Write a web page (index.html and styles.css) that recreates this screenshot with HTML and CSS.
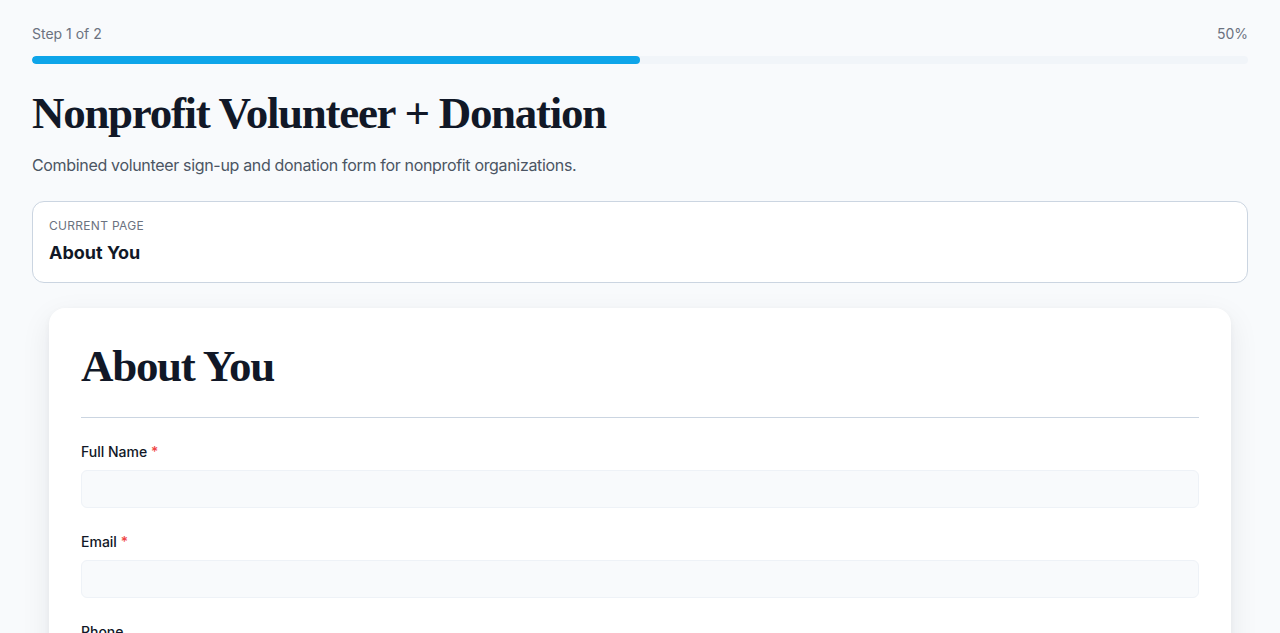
FILE: index.html
```html
<!DOCTYPE html>
<html lang="en">
<head>
<meta charset="utf-8">
<title>Nonprofit Volunteer + Donation</title>
<link rel="stylesheet" href="styles.css">
</head>
<body>
<main class="page">
  <div class="progress-head">
    <span>Step 1 of 2</span>
    <span>50%</span>
  </div>
  <div class="track"><div class="fill" style="width:50%"></div></div>
  <h1 class="title">Nonprofit Volunteer + Donation</h1>
  <p class="subtitle">Combined volunteer sign-up and donation form for nonprofit organizations.</p>
  <div class="current">
    <div class="current-label">Current Page</div>
    <div class="current-name">About You</div>
  </div>
  <section class="card">
    <h2 class="card-title">About You</h2>
    <div class="field">
      <label class="label">Full Name <span class="req">*</span></label>
      <div class="input"></div>
    </div>
    <div class="field">
      <label class="label">Email <span class="req">*</span></label>
      <div class="input"></div>
    </div>
    <div class="field">
      <label class="label">Phone</label>
      <div class="input"></div>
    </div>
  </section>
</main>
</body>
</html>
```

FILE: styles.css
```css
* { box-sizing: border-box; }
html, body { margin: 0; padding: 0; }
body {
  background: #f8fafc;
  font-family: Inter, "Noto Sans", sans-serif;
  color: #111827;
}
.page {
  padding: 24px 32px 40px;
}
.progress-head {
  display: flex;
  justify-content: space-between;
  font-size: 14px;
  line-height: 20px;
  color: #6b7280;
}
.track {
  margin-top: 12px;
  height: 8px;
  background: #f1f5f9;
  border-radius: 4px;
  overflow: hidden;
}
.fill {
  height: 100%;
  background: #0ea5e9;
  border-radius: 4px;
}
.title {
  font-family: "Liberation Serif", "Times New Roman", serif;
  font-weight: 700;
  font-size: 45px;
  line-height: 52px;
  letter-spacing: -1.3px;
  color: #111827;
  margin: 23px 0 0;
}
.subtitle {
  margin: 14px 0 0;
  font-size: 16px;
  line-height: 24px;
  letter-spacing: -0.33px;
  color: #4b5563;
}
.current {
  margin-top: 24px;
  background: #fff;
  border: 1px solid #cbd5e1;
  border-radius: 12px;
  padding: 16px 16px 16px;
}
.current-label {
  font-size: 12px;
  line-height: 16px;
  text-transform: uppercase;
  letter-spacing: 0.3px;
  color: #6b7280;
}
.current-name {
  margin-top: 6px;
  font-size: 18px;
  line-height: 26px;
  font-weight: 700;
  color: #111827;
}
.card {
  margin: 25px 17px 0;
  background: #fff;
  border-radius: 16px;
  box-shadow: 0 10px 30px rgba(15, 23, 42, 0.08), 0 2px 6px rgba(15, 23, 42, 0.04);
  padding: 32px 32px 40px;
}
.card-title {
  font-family: "Liberation Serif", "Times New Roman", serif;
  font-weight: 700;
  font-size: 45px;
  line-height: 52px;
  letter-spacing: -1.3px;
  margin: 0;
  padding-bottom: 25px;
  border-bottom: 1px solid #cbd5e1;
  color: #111827;
}
.field {
  margin-top: 24px;
}
.label {
  display: block;
  font-size: 14px;
  line-height: 20px;
  font-weight: 500;
  color: #111827;
}
.req { color: #ef4444; }
.input {
  margin-top: 8px;
  height: 38px;
  background: #f8fafc;
  border: 1px solid #eef2f7;
  border-radius: 6px;
}
```
